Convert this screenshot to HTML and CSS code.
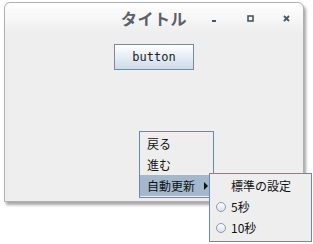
FILE: index.html
```html
<!DOCTYPE html>
<html lang="ja">
<head>
<meta charset="utf-8">
<link rel="stylesheet" href="styles.css">
</head>
<body>
<div class="desk">
  <div class="window">
    <div class="titlebar">
      <span class="title">タイトル</span>
      <div class="ctrls">
        <svg class="ctrl" width="9" height="9" viewBox="0 0 9 9"><rect x="2" y="6" width="4" height="2" fill="#4c5660"/></svg>
        <svg class="ctrl" width="9" height="9" viewBox="0 0 9 9"><rect x="2" y="2" width="5" height="5" fill="none" stroke="#4c5660" stroke-width="1.6"/></svg>
        <svg class="ctrl" width="9" height="9" viewBox="0 0 9 9"><path d="M2 2L7 7M7 2L2 7" stroke="#4c5660" stroke-width="1.8"/></svg>
      </div>
    </div>
    <div class="content">
      <button class="btn">button</button>
    </div>
  </div>
  <div class="menu popup">
    <div class="item">戻る</div>
    <div class="item">進む</div>
    <div class="item sel">自動更新<span class="arrow"></span></div>
  </div>
  <div class="menu sub">
    <div class="item label">標準の設定</div>
    <div class="item"><span class="radio"></span>5秒</div>
    <div class="item"><span class="radio"></span>10秒</div>
  </div>
</div>
</body>
</html>
```
FILE: styles.css
```css
html, body { margin: 0; padding: 0; background: #fff; }
body { font-family: "Noto Sans CJK JP", "DejaVu Sans", sans-serif; }
.desk { position: relative; width: 313px; height: 244px; padding: 2px 0 0 4px; box-sizing: border-box; }
.window {
  width: 300px; height: 200px; box-sizing: border-box;
  border: 1px solid #b0b0b0; border-radius: 6px 6px 0 0;
  background: #eeeeee;
  box-shadow: 2px 3px 3px rgba(0,0,0,0.35);
  display: flex; flex-direction: column;
}
.titlebar {
  height: 30px; flex: none; display: flex; align-items: center;
  background: linear-gradient(#ffffff, #eeeeee);
  border-radius: 6px 6px 0 0; position: relative;
}
.title {
  margin-left: 116px; font-size: 16px; font-weight: bold; color: #5a6169; letter-spacing: 0.5px;
}
.ctrls { margin-left: auto; margin-right: 12px; display: flex; gap: 27px; align-items: center; }
.ctrl { display: block; }
.content { display: flex; padding-top: 11px; padding-left: 109px; }
.btn {
  width: 80px; height: 26px; box-sizing: border-box;
  border: 1px solid #7a8a99;
  background: linear-gradient(#ffffff, #cddbea);
  font-family: "DejaVu Sans Mono", monospace; font-size: 12px; color: #222;
  padding: 0;
}
.menu {
  position: absolute; background: #eeeeee; border: 1px solid #6b86bd; box-sizing: border-box;
  font-size: 12px; color: #111; padding: 1px 0;
}
.popup { left: 139px; top: 131px; width: 75px; }
.popup .item { height: 21px; line-height: 21px; padding-left: 7px; position: relative; }
.popup .item.sel { background: #a3b8cc; }
.arrow {
  position: absolute; left: 64px; top: 7px; width: 0; height: 0;
  border-left: 4px solid #111; border-top: 4px solid transparent; border-bottom: 4px solid transparent;
}
.sub { left: 209px; top: 173px; width: 103px; height: 69px; }
.sub .item { height: 21px; line-height: 21px; display: flex; align-items: center; padding-left: 6px; }
.sub .item.label { padding-left: 21px; }
.radio {
  width: 8px; height: 8px; border-radius: 50%; border: 1px solid #8a9aab;
  background: linear-gradient(#ffffff, #d8e2ec); margin-right: 5px; flex: none;
}
```
